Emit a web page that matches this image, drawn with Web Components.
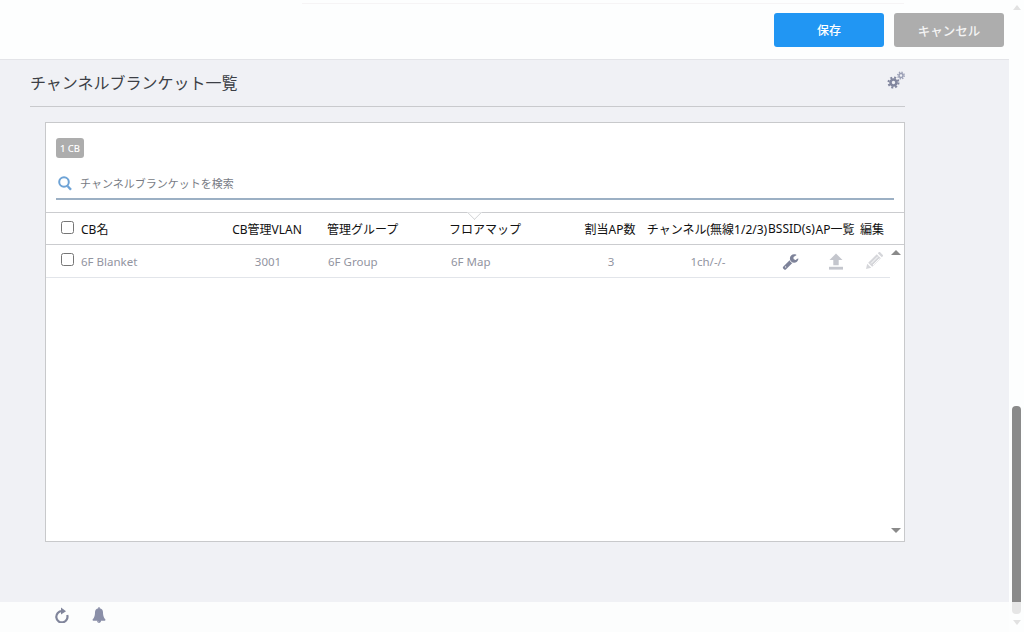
<!DOCTYPE html>
<html lang="ja">
<head>
<meta charset="utf-8">
<title>チャンネルブランケット一覧</title>
<style>
  html, body { margin: 0; height: 100%; overflow: hidden; }
  body {
    font-family: "Noto Sans", "Noto Sans CJK JP", sans-serif;
    --cols: 35px 146px 80px 142px 125px 72px 122px 45px 44px 33px;
  }
</style>
</head>
<body>
<app-shell>
  <app-toolbar>
    <app-button variant="primary">保存</app-button>
    <app-button>キャンセル</app-button>
  </app-toolbar>
  <app-content>
    <section-title>チャンネルブランケット一覧</section-title>
    <cb-panel>
      <count-badge>1 CB</count-badge>
      <search-field placeholder="チャンネルブランケットを検索"></search-field>
      <cb-table>
        <cb-head></cb-head>
        <cb-row name="6F Blanket" vlan="3001" group="6F Group" map="6F Map" count="3" channel="1ch/-/-"></cb-row>
      </cb-table>
    </cb-panel>
  </app-content>
  <app-footer></app-footer>
</app-shell>

<script>
class AppShell extends HTMLElement {
  connectedCallback() {
    this.attachShadow({ mode: "open" });
    this.shadowRoot.innerHTML = `
      <style>
        :host { display: flex; width: 1024px; height: 632px; background: #fdfefe; }
        .page { display: flex; flex-direction: column; width: 1009px; height: 632px; }
        .bar { width: 15px; display: flex; flex-direction: column; align-items: center; }
        .up { width: 0; height: 0; margin-top: 5px; border: 4.5px solid transparent; border-top: 0; border-bottom: 5px solid #e2e2e2; }
        .thumb { width: 9px; height: 196px; margin-top: 396px; margin-left: -1px; background: #8a8a8a; border-radius: 4px 4px 0 0; }
        .rest { width: 9px; height: 12px; margin-left: -1px; background: #e6e6e6; border-radius: 0 0 4px 4px; }
        .down { width: 0; height: 0; margin-top: 6px; border: 4.5px solid transparent; border-bottom: 0; border-top: 5px solid #e2e2e2; }
      </style>
      <div class="page"><slot></slot></div>
      <div class="bar">
        <div class="up"></div>
        <div class="thumb"></div>
        <div class="rest"></div>
        <div class="down"></div>
      </div>`;
  }
}

class AppToolbar extends HTMLElement {
  connectedCallback() {
    this.attachShadow({ mode: "open" });
    this.shadowRoot.innerHTML = `
      <style>
        :host { display: block; height: 60px; box-sizing: border-box; border-bottom: 1px solid #e3e4e8; background: #fdfefe; flex: none; }
        .ghost { height: 3px; margin-left: 302px; width: 602px; border-bottom: 1px solid #f6f4f5; }
        .actions { display: flex; justify-content: flex-end; gap: 10px; padding: 9px 5px 0 0; }
      </style>
      <div class="ghost"></div>
      <div class="actions"><slot></slot></div>`;
  }
}

class AppButton extends HTMLElement {
  connectedCallback() {
    this.attachShadow({ mode: "open" });
    this.shadowRoot.innerHTML = `
      <style>
        :host { display: flex; align-items: center; justify-content: center; width: 110px; height: 34px; border-radius: 3px; background: #adadad; color: #f4f4f4; font-size: 12.5px; font-weight: 500; }
        :host([variant="primary"]) { background: #2196f3; color: #fff; font-size: 12px; }
      </style>
      <slot></slot>`;
  }
}

class AppContent extends HTMLElement {
  connectedCallback() {
    this.attachShadow({ mode: "open" });
    this.shadowRoot.innerHTML = `
      <style>
        :host { display: block; flex: 1; background: #f0f1f5; padding: 0 104px 0 30px; }
      </style>
      <slot></slot>`;
  }
}

class SectionTitle extends HTMLElement {
  connectedCallback() {
    this.attachShadow({ mode: "open" });
    this.shadowRoot.innerHTML = `
      <style>
        :host { display: flex; justify-content: space-between; height: 47px; box-sizing: border-box; border-bottom: 1px solid #c9cacd; color: #3c3f46; font-size: 16px; }
        .text { padding-top: 10px; line-height: 26px; }
        svg { margin: 11px -1px 0 0; }
      </style>
      <div class="text"><slot></slot></div>
      <svg width="19" height="19" viewBox="0 0 19 19" fill="#8a8fa8">
        <circle cx="6.5" cy="11.5" r="3" fill="none" stroke="#82879f" stroke-width="2.6"/>
        <circle cx="6.5" cy="11.5" r="5" fill="none" stroke="#82879f" stroke-width="2" stroke-dasharray="2 1.93"/>
        <circle cx="14" cy="4.5" r="2" fill="none" stroke="#9a9fb5" stroke-width="1.5"/>
        <circle cx="14" cy="4.5" r="3.3" fill="none" stroke="#9a9fb5" stroke-width="1.4" stroke-dasharray="1.3 1.3"/>
      </svg>`;
  }
}

class CbPanel extends HTMLElement {
  connectedCallback() {
    this.attachShadow({ mode: "open" });
    this.shadowRoot.innerHTML = `
      <style>
        :host { display: block; margin: 15px 0 0 15px; height: 420px; box-sizing: border-box; border: 1px solid #c8c9cb; background: #fff; padding-top: 15px; }
      </style>
      <slot></slot>`;
  }
}

class CountBadge extends HTMLElement {
  connectedCallback() {
    this.attachShadow({ mode: "open" });
    this.shadowRoot.innerHTML = `
      <style>
        :host { display: flex; align-items: center; justify-content: center; width: 28px; height: 20px; margin-left: 10px; border-radius: 3px; background: #adadad; color: #fff; font-size: 9.5px; font-weight: 500; }
      </style>
      <slot></slot>`;
  }
}

class SearchField extends HTMLElement {
  connectedCallback() {
    this.attachShadow({ mode: "open" });
    this.shadowRoot.innerHTML = `
      <style>
        :host { display: flex; align-items: center; gap: 8px; height: 31px; margin: 11px 10px 0; padding: 0 0 1px 2px; box-sizing: border-box; border-bottom: 2px solid #9cb0c4; color: #777b84; font-size: 11px; }
      </style>
      <svg width="14" height="15" viewBox="0 0 14 15" fill="none" stroke="#6ea3d6">
        <circle cx="6" cy="6" r="4.8" stroke-width="2"/>
        <path d="M9.5 10l3.5 3.8" stroke-width="2.4"/>
      </svg>
      <span>${this.getAttribute("placeholder")}</span>`;
  }
}

class CbTable extends HTMLElement {
  connectedCallback() {
    this.attachShadow({ mode: "open" });
    this.shadowRoot.innerHTML = `
      <style>
        :host { display: block; margin-top: 12px; position: relative; }
        .up, .down { position: absolute; right: 3px; width: 0; height: 0; border: 5px solid transparent; }
        .up { top: 38px; border-top: 0; border-bottom: 5px solid #8a8a8a; }
        .down { top: 316px; border-bottom: 0; border-top: 5px solid #8a8a8a; }
      </style>
      <slot></slot>
      <div class="up"></div>
      <div class="down"></div>`;
  }
}

class CbHead extends HTMLElement {
  connectedCallback() {
    this.attachShadow({ mode: "open" });
    this.shadowRoot.innerHTML = `
      <style>
        :host { display: grid; grid-template-columns: var(--cols); align-items: center; height: 33px; box-sizing: border-box; border-top: 1px solid #cbcccf; border-bottom: 1px solid #cbcccf; color: #111; font-size: 12px; position: relative; white-space: nowrap; }
        input { margin: 0 0 2px 15px; width: 13px; height: 13px; }
        .c { text-align: center; }
        .g { padding-left: 20px; }
        .e { padding-left: 3px; }
        .notch { position: absolute; left: 423px; top: -1px; width: 10px; height: 10px; transform: translateY(-5px) rotate(45deg); background: #fff; border-right: 1px solid #d5d6d8; border-bottom: 1px solid #d5d6d8; clip-path: polygon(100% 0, 100% 100%, 0 100%); }
      </style>
      <div class="notch"></div>
      <input type="checkbox">
      <span>CB名</span>
      <span class="c">CB管理VLAN</span>
      <span class="g">管理グループ</span>
      <span>フロアマップ</span>
      <span class="c">割当AP数</span>
      <span class="c">チャンネル(無線1/2/3)</span>
      <span class="c">BSSID(s)</span>
      <span class="c">AP一覧</span>
      <span class="e">編集</span>`;
  }
}

class CbRow extends HTMLElement {
  connectedCallback() {
    const a = (n) => this.getAttribute(n);
    this.attachShadow({ mode: "open" });
    this.shadowRoot.innerHTML = `
      <style>
        :host { display: grid; grid-template-columns: var(--cols); align-items: center; width: 844px; height: 33px; box-sizing: border-box; border-bottom: 1px solid #e2e5ea; color: #92949f; font-size: 11.5px; white-space: nowrap; }
        input { margin: 0 0 3px 15px; width: 13px; height: 13px; }
        .c { text-align: center; padding-left: 2px; }
        .g { padding-left: 21px; }
        .m { padding-left: 2px; }
        svg { display: block; margin: 0 auto; }
        .up { position: relative; left: 1px; }
      </style>
      <input type="checkbox">
      <span>${a("name")}</span>
      <span class="c">${a("vlan")}</span>
      <span class="g">${a("group")}</span>
      <span class="m">${a("map")}</span>
      <span class="c">${a("count")}</span>
      <span class="c">${a("channel")}</span>
      <svg width="17" height="17" viewBox="0 0 1792 1792" fill="#7d8299"><path d="M448 1472q0-26-19-45t-45-19-45 19-19 45 19 45 45 19 45-19 19-45zm644-420l-682 682q-37 37-90 37-52 0-91-37l-106-108q-38-36-38-90 0-53 38-91l681-681q39 98 114.5 173.5t173.5 114.5zm634-435q0 39-23 106-47 134-164.5 217.5t-258.5 83.5q-185 0-316.5-131.5t-131.5-316.5 131.5-316.5 316.5-131.5q58 0 121.5 16.5t107.5 46.5q16 11 16 28t-16 28l-293 169v224l193 107q5-3 79-48.5t135.5-81 70.5-35.5q15 0 23.5 10t8.5 25z"/></svg>
      <svg class="up" width="16" height="17" viewBox="0 0 16 17" fill="#c4c6cd"><path d="M8 0.5l6.5 6.5h-3.8v5.2h-5.4v-5.2h-3.8z"/><rect x="1" y="13.8" width="14" height="2.8"/></svg>
      <svg width="18" height="18" viewBox="0 0 18 18"><g fill="#d5d6da"><path d="M1 17l1.2-5.2 4 4z"/><path d="M3.2 10.8l8.6-8.6 4 4-8.6 8.6z"/><path d="M12.8 1.2l1-1a1 1 0 0 1 1.3 0l2.7 2.7a1 1 0 0 1 0 1.3l-1 1z"/></g><path d="M6 11.5l7-7M8 13l6.5-6.5" stroke="#fff" stroke-width="0.9" fill="none"/></svg>`;
  }
}

class AppFooter extends HTMLElement {
  connectedCallback() {
    this.attachShadow({ mode: "open" });
    this.shadowRoot.innerHTML = `
      <style>
        :host { display: flex; align-items: center; gap: 22px; height: 30px; flex: none; box-sizing: border-box; padding: 0 0 4px 54px; background: #fcfdfd; }
      </style>
      <svg width="16" height="16" viewBox="0 0 16 16" fill="none">
        <path d="M8 4.2A5.6 5.6 0 1 0 13.2 8" stroke="#80859b" stroke-width="2.2"/>
        <path d="M7 0.5l5 3.7-5 3.3z" fill="#80859b"/>
      </svg>
      <svg width="14" height="16" viewBox="0 0 1792 1792" preserveAspectRatio="none" fill="#8a8fa8"><path d="M912 1696q0-16-16-16-59 0-101.5-42.5t-42.5-101.5q0-16-16-16t-16 16q0 73 51.5 124.5t124.5 51.5q16 0 16-16zm816-288q0 52-38 90t-90 38h-448q0 106-75 181t-181 75-181-75-75-181h-448q-52 0-90-38t-38-90q50-42 91-88t85-119.5 74.5-158.5 50-206 19.5-260q0-152 117-282.5t307-158.5q-8-19-8-39 0-40 28-68t68-28 68 28 28 68q0 20-8 39 190 28 307 158.5t117 282.5q0 139 19.5 260t50 206 74.5 158.5 85 119.5 91 88z"/></svg>`;
  }
}

customElements.define("app-shell", AppShell);
customElements.define("app-toolbar", AppToolbar);
customElements.define("app-button", AppButton);
customElements.define("app-content", AppContent);
customElements.define("section-title", SectionTitle);
customElements.define("cb-panel", CbPanel);
customElements.define("count-badge", CountBadge);
customElements.define("search-field", SearchField);
customElements.define("cb-table", CbTable);
customElements.define("cb-head", CbHead);
customElements.define("cb-row", CbRow);
customElements.define("app-footer", AppFooter);
</script>
</body>
</html>
